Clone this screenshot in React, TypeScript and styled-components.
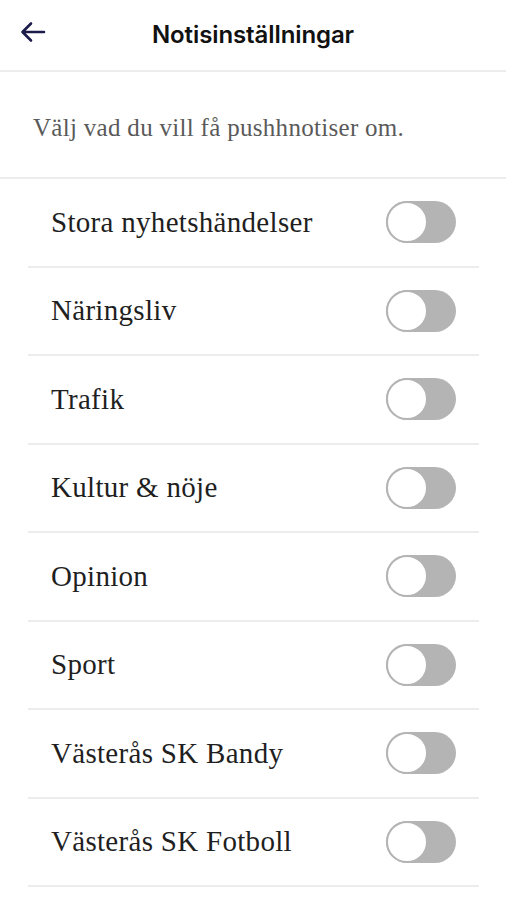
import React, { useState } from "react";
import styled, { createGlobalStyle } from "styled-components";

const Global = createGlobalStyle`
  html, body { margin: 0; padding: 0; background: #fff; }
  * { box-sizing: border-box; }
`;

const Page = styled.div`
  width: 506px;
  min-height: 900px;
  background: #fff;
  display: flex;
  flex-direction: column;
`;

const Header = styled.header`
  height: 72px;
  border-bottom: 2px solid #ececec;
  display: grid;
  grid-template-columns: 60px 1fr 60px;
  align-items: center;
`;

const BackButton = styled.button`
  border: none;
  background: none;
  padding: 0 0 0 20px;
  margin-top: -6px;
  display: flex;
  align-items: center;
  color: #1c1c4a;
  cursor: pointer;
`;

const Title = styled.h1`
  margin: 0;
  margin-top: -2px;
  text-align: center;
  font-family: Inter, "Noto Sans", sans-serif;
  font-weight: 600;
  font-size: 24px;
  letter-spacing: -0.1px;
  color: #111;
`;

const Intro = styled.p`
  margin: 0;
  height: 107px;
  padding: 6px 0 0 33px;
  display: flex;
  align-items: center;
  border-bottom: 2px solid #ececec;
  font-family: "Liberation Serif", serif;
  font-size: 25px;
  letter-spacing: 0.3px;
  color: #5a5a5a;
`;

const List = styled.ul`
  list-style: none;
  margin: 0;
  padding: 0 27px 0 28px;
`;

const Row = styled.li`
  height: 88.5px;
  border-bottom: 2px solid #ececec;
  display: flex;
  align-items: center;
  justify-content: space-between;
  padding: 0 23px;
`;

const Label = styled.span`
  font-family: "Liberation Serif", serif;
  font-size: 29px;
  letter-spacing: 0.3px;
  color: #1f1f1f;
`;

const Track = styled.button<{ $on: boolean }>`
  width: 70px;
  height: 42px;
  border-radius: 21px;
  border: none;
  padding: 0;
  background: ${(p) => (p.$on ? "#1c1c4a" : "#b4b4b4")};
  display: flex;
  align-items: center;
  justify-content: ${(p) => (p.$on ? "flex-end" : "flex-start")};
  cursor: pointer;
`;

const Knob = styled.span`
  width: 42px;
  height: 42px;
  border-radius: 50%;
  background: #fff;
  border: 2px solid #b4b4b4;
`;

const topics = [
  "Stora nyhetshändelser",
  "Näringsliv",
  "Trafik",
  "Kultur & nöje",
  "Opinion",
  "Sport",
  "Västerås SK Bandy",
  "Västerås SK Fotboll",
];

export default function App() {
  const [on, setOn] = useState<boolean[]>(topics.map(() => false));
  return (
    <Page>
      <Global />
      <Header>
        <BackButton aria-label="Tillbaka">
          <svg width="26" height="22" viewBox="0 0 26 22" fill="none">
            <path
              d="M24 11H3M11 2.5L2.5 11L11 19.5"
              stroke="currentColor"
              strokeWidth="2.6"
              strokeLinecap="round"
              strokeLinejoin="round"
            />
          </svg>
        </BackButton>
        <Title>Notisinställningar</Title>
        <span />
      </Header>
      <Intro>Välj vad du vill få pushhnotiser om.</Intro>
      <List>
        {topics.map((t, i) => (
          <Row key={t}>
            <Label>{t}</Label>
            <Track
              $on={on[i]}
              onClick={() => setOn((s) => s.map((v, j) => (j === i ? !v : v)))}
            >
              <Knob />
            </Track>
          </Row>
        ))}
      </List>
    </Page>
  );
}
